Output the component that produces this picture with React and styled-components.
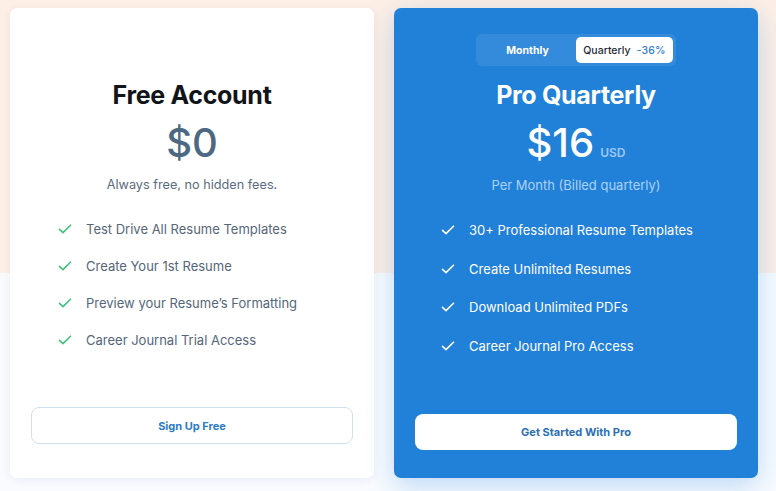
import React, { useState } from "react";
import styled, { createGlobalStyle } from "styled-components";

const GlobalStyle = createGlobalStyle`
  * { box-sizing: border-box; }
  body {
    margin: 0;
    font-family: Inter, "Noto Sans", sans-serif;
    -webkit-font-smoothing: antialiased;
  }
`;

const Page = styled.div`
  width: 776px;
  height: 491px;
  padding: 8px 18px 13px 10px;
  background: linear-gradient(#fdefe6 0, #fdefe6 273px, #f9fbff 273px);
  display: grid;
  grid-template-columns: 364px 364px;
  column-gap: 20px;
`;

const Card = styled.div`
  display: flex;
  flex-direction: column;
  align-items: center;
  border-radius: 7px;
  padding: ${(p) => (p.pro ? "26px 21px 28px" : "71px 21px 34px")};
  background: ${(p) => (p.pro ? "#2180d8" : "#ffffff")};
  box-shadow: ${(p) =>
    p.pro
      ? "0 8px 28px rgba(33, 128, 216, 0.28)"
      : "0 2px 10px rgba(40, 60, 90, 0.07)"};
`;

const Toggle = styled.div`
  display: flex;
  width: 200px;
  height: 32px;
  padding: 3px;
  border-radius: 6px;
  background: rgba(255, 255, 255, 0.09);
  margin-bottom: 13px;
`;

const ToggleOption = styled.button`
  flex: 1;
  border: none;
  border-radius: 5px;
  font-family: inherit;
  font-size: 10.5px;
  cursor: pointer;
  display: flex;
  align-items: center;
  justify-content: center;
  gap: 6px;
  background: ${(p) => (p.active ? "#ffffff" : "transparent")};
  color: ${(p) => (p.active ? "#1e2a36" : "#ffffff")};
  font-weight: ${(p) => (p.active ? 500 : 700)};
`;

const Discount = styled.span`
  color: #2a7ed0;
  font-weight: 500;
  letter-spacing: 0.2px;
`;

const Title = styled.h2`
  margin: 0;
  font-size: 25px;
  line-height: 32px;
  font-weight: 700;
  letter-spacing: -0.3px;
  color: ${(p) => (p.pro ? "#ffffff" : "#111418")};
`;

const PriceRow = styled.div`
  display: flex;
  align-items: baseline;
  gap: 6px;
  margin-top: 8px;
`;

const Price = styled.span`
  font-size: 40px;
  line-height: 48px;
  font-weight: 500;
  color: ${(p) => (p.pro ? "#ffffff" : "#4d6883")};
`;

const Currency = styled.span`
  font-size: 12px;
  font-weight: 600;
  color: #9fc8f2;
`;

const Note = styled.p`
  margin: 9px 0 0;
  font-size: ${(p) => (p.pro ? "13px" : "12.7px")};
  line-height: 18px;
  color: ${(p) => (p.pro ? "#acd2f8" : "#5b6b7f")};
`;

const Features = styled.ul`
  list-style: none;
  margin: ${(p) => (p.pro ? "26px 0 0" : "25px 0 0")};
  padding: ${(p) => (p.pro ? "0 0 0 26px" : "0 0 0 27px")};
  align-self: stretch;
  display: flex;
  flex-direction: column;
  gap: ${(p) => (p.pro ? "18.5px" : "17px")};
`;

const Feature = styled.li`
  display: flex;
  align-items: center;
  gap: 14px;
  font-size: 13px;
  line-height: 20px;
  font-weight: 400;
  color: ${(p) => (p.pro ? "#ffffff" : "#56667a")};
`;

const CTA = styled.button`
  margin-top: auto;
  align-self: stretch;
  height: ${(p) => (p.pro ? "36px" : "37px")};
  border-radius: 8px;
  font-family: inherit;
  font-size: 11px;
  font-weight: 700;
  cursor: pointer;
  background: #ffffff;
  border: ${(p) => (p.pro ? "none" : "1px solid #cfe1ee")};
  color: ${(p) => (p.pro ? "#2b6fb4" : "#2b7bc8")};
`;

const Check = ({ color }) => (
  <svg width="14" height="14" viewBox="0 0 14 14" fill="none">
    <path
      d="M1.5 7.4 L5 10.6 L12.5 3.2"
      stroke={color}
      strokeWidth="1.6"
      strokeLinecap="round"
      strokeLinejoin="round"
    />
  </svg>
);

const freeFeatures = [
  "Test Drive All Resume Templates",
  "Create Your 1st Resume",
  "Preview your Resume\u2019s Formatting",
  "Career Journal Trial Access",
];

const proFeatures = [
  "30+ Professional Resume Templates",
  "Create Unlimited Resumes",
  "Download Unlimited PDFs",
  "Career Journal Pro Access",
];

export default function App() {
  const [plan, setPlan] = useState("quarterly");
  return (
    <>
      <GlobalStyle />
      <Page>
        <Card>
          <Title>Free Account</Title>
          <PriceRow>
            <Price>$0</Price>
          </PriceRow>
          <Note>Always free, no hidden fees.</Note>
          <Features>
            {freeFeatures.map((f) => (
              <Feature key={f}>
                <Check color="#3ec27c" />
                {f}
              </Feature>
            ))}
          </Features>
          <CTA>Sign Up Free</CTA>
        </Card>

        <Card pro>
          <Toggle>
            <ToggleOption
              active={plan === "monthly"}
              onClick={() => setPlan("monthly")}
            >
              Monthly
            </ToggleOption>
            <ToggleOption
              active={plan === "quarterly"}
              onClick={() => setPlan("quarterly")}
            >
              Quarterly <Discount>-36%</Discount>
            </ToggleOption>
          </Toggle>
          <Title pro>Pro Quarterly</Title>
          <PriceRow>
            <Price pro>$16</Price>
            <Currency>USD</Currency>
          </PriceRow>
          <Note pro>Per Month (Billed quarterly)</Note>
          <Features pro>
            {proFeatures.map((f) => (
              <Feature pro key={f}>
                <Check color="#ffffff" />
                {f}
              </Feature>
            ))}
          </Features>
          <CTA pro>Get Started With Pro</CTA>
        </Card>
      </Page>
    </>
  );
}
